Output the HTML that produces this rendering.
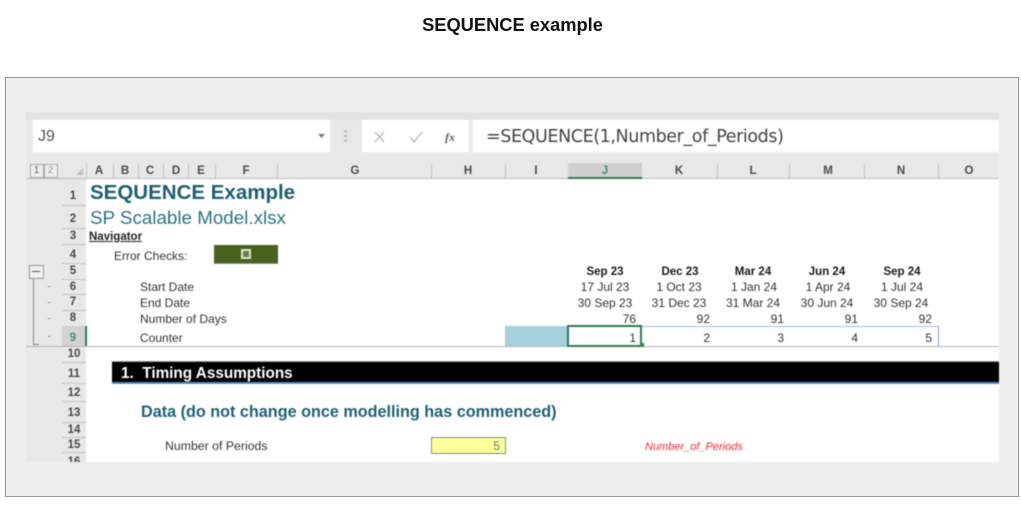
<!DOCTYPE html>
<html><head><meta charset="utf-8"><style>
html,body{margin:0;padding:0;background:#fff;width:1021px;height:531px;overflow:hidden;font-family:"Liberation Sans",sans-serif}
.h{position:absolute;left:0;top:13px;width:1025px;text-align:center;font-size:18.3px;font-weight:bold;line-height:24px;color:#111}
.f{position:absolute;left:5px;top:77px;width:1012px;height:418px;border:1px solid #979797;background:#eee}
.s{position:absolute;left:0;top:0;width:1021px;height:531px;filter:blur(.5px)}
.s div{position:absolute}
.t{position:absolute;white-space:nowrap;font-size:12px;line-height:14px;color:#333}
.c{text-align:center;transform:translateX(-50%)}
.r{text-align:right;transform:translateX(-100%)}
.b{font-weight:bold;color:#1a1a1a;font-size:11.5px}
.ch{font-weight:bold;color:#4a4a4a;font-size:11.5px}
.rn{font-weight:bold;color:#4a4a4a;font-size:11.5px;transform:translateX(-50%)}
</style></head><body>
<div class="h">SEQUENCE example</div>
<div class="f"></div>
<div class="s">
<div style="left:26px;top:112px;width:973px;height:350px;background:#e8e8e8"></div>
<div style="left:26px;top:112px;width:973px;height:8px;background:#e3e3e3"></div>
<div style="left:33px;top:120px;width:297px;height:32px;background:#fff"></div>
<div style="left:362px;top:120px;width:107px;height:32px;background:#fff"></div>
<div style="left:473px;top:120px;width:526px;height:32px;background:#fff"></div>
<div style="left:86px;top:179px;width:913px;height:283px;background:#fff"></div>
<div style="left:26px;top:178px;width:973px;height:1px;background:#bcbcbc"></div>
<span class="t" style="left:38px;top:127px;font-size:16px;line-height:20px;color:#555">J9</span>
<svg style="position:absolute;left:317px;top:133px" width="9" height="6"><path d="M1 1h7L4.500 5z" fill="#777"/></svg>
<svg style="position:absolute;left:343px;top:130px" width="6" height="14"><path d="M1 1h3M1 6h3M1 11h3" stroke="#bbb" stroke-width="2"/></svg>
<svg style="position:absolute;left:372px;top:130px" width="90" height="14" fill="none"><path d="M3 2l9 10M12 2L3 12" stroke="#b5b5b5" stroke-width="1.300"/><path d="M38 7l4 5 8-10" stroke="#b5b5b5" stroke-width="1.300"/></svg>
<span class="t" style="left:445px;top:129px;font:italic bold 12px/16px 'Liberation Serif',serif;color:#666">fx</span>
<span class="t" style="left:486px;top:126px;font-size:17.500px;line-height:22px;color:#444;font-family:'DejaVu Sans',sans-serif;letter-spacing:-.4px">=SEQUENCE(1,Number_of_Periods)</span>

<div style="left:30px;top:164px;width:12px;height:12px;border:1px solid #aaa;background:#eee"></div>
<div style="left:44px;top:164px;width:12px;height:12px;border:1px solid #aaa;background:#eee"></div>
<span class="t c" style="left:36.500px;top:164px;font-size:10px;color:#666">1</span>
<span class="t c" style="left:50.500px;top:164px;font-size:10px;color:#999">2</span>
<svg style="position:absolute;left:76px;top:168px" width="8" height="8"><path d="M7 0v7H0z" fill="#c4c4c4"/></svg>
<div style="left:86px;top:163px;width:1px;height:16px;background:#c8c8c8"></div>
<div style="left:113px;top:164px;width:1px;height:14px;background:#c4c4c4"></div>
<div style="left:138px;top:164px;width:1px;height:14px;background:#c4c4c4"></div>
<div style="left:163px;top:164px;width:1px;height:14px;background:#c4c4c4"></div>
<div style="left:188px;top:164px;width:1px;height:14px;background:#c4c4c4"></div>
<div style="left:215px;top:164px;width:1px;height:14px;background:#c4c4c4"></div>
<div style="left:277px;top:164px;width:1px;height:14px;background:#c4c4c4"></div>
<div style="left:431px;top:164px;width:1px;height:14px;background:#c4c4c4"></div>
<div style="left:505px;top:164px;width:1px;height:14px;background:#c4c4c4"></div>
<div style="left:568px;top:163px;width:74px;height:14px;background:#cfcfcf"></div>
<div style="left:568px;top:177px;width:74px;height:2px;background:#2f7d4f"></div>
<div style="left:717px;top:164px;width:1px;height:14px;background:#c4c4c4"></div>
<div style="left:789px;top:164px;width:1px;height:14px;background:#c4c4c4"></div>
<div style="left:864px;top:164px;width:1px;height:14px;background:#c4c4c4"></div>
<div style="left:938px;top:164px;width:1px;height:14px;background:#c4c4c4"></div>
<span class="t c ch" style="left:99px;top:164px">A</span>
<span class="t c ch" style="left:125px;top:164px">B</span>
<span class="t c ch" style="left:150px;top:164px">C</span>
<span class="t c ch" style="left:176px;top:164px">D</span>
<span class="t c ch" style="left:201px;top:164px">E</span>
<span class="t c ch" style="left:246px;top:164px">F</span>
<span class="t c ch" style="left:355px;top:164px">G</span>
<span class="t c ch" style="left:468px;top:164px">H</span>
<span class="t c ch" style="left:536px;top:164px">I</span>
<span class="t c ch" style="left:605px;top:164px;color:#4d8a68">J</span>
<span class="t c ch" style="left:679px;top:164px">K</span>
<span class="t c ch" style="left:753px;top:164px">L</span>
<span class="t c ch" style="left:828px;top:164px">M</span>
<span class="t c ch" style="left:901px;top:164px">N</span>
<span class="t c ch" style="left:969px;top:164px">O</span>

<div style="left:62px;top:205px;width:24px;height:1px;background:#c4c4c4"></div>
<div style="left:62px;top:228px;width:24px;height:1px;background:#c4c4c4"></div>
<div style="left:62px;top:244px;width:24px;height:1px;background:#c4c4c4"></div>
<div style="left:62px;top:263px;width:24px;height:1px;background:#c4c4c4"></div>
<div style="left:62px;top:279px;width:24px;height:1px;background:#c4c4c4"></div>
<div style="left:62px;top:294px;width:24px;height:1px;background:#c4c4c4"></div>
<div style="left:62px;top:310px;width:24px;height:1px;background:#c4c4c4"></div>
<div style="left:62px;top:326px;width:24px;height:20px;background:#d2d2d2"></div>
<div style="left:85px;top:326px;width:2px;height:20px;background:#2f7d4f"></div>
<div style="left:26px;top:346px;width:973px;height:1px;background:#b4b4b4"></div>
<div style="left:62px;top:362px;width:24px;height:1px;background:#c4c4c4"></div>
<div style="left:62px;top:383px;width:24px;height:1px;background:#c4c4c4"></div>
<div style="left:62px;top:401px;width:24px;height:1px;background:#c4c4c4"></div>
<div style="left:62px;top:422px;width:24px;height:1px;background:#c4c4c4"></div>
<div style="left:62px;top:437px;width:24px;height:1px;background:#c4c4c4"></div>
<div style="left:62px;top:452px;width:24px;height:1px;background:#c4c4c4"></div>
<span class="t rn" style="left:73px;top:189px">1</span>
<span class="t rn" style="left:73px;top:212px">2</span>
<span class="t rn" style="left:73px;top:229px">3</span>
<span class="t rn" style="left:73px;top:248px">4</span>
<span class="t rn" style="left:73px;top:264px">5</span>
<span class="t rn" style="left:73px;top:280px">6</span>
<span class="t rn" style="left:73px;top:295px">7</span>
<span class="t rn" style="left:73px;top:311px">8</span>
<span class="t rn" style="left:73px;top:331px;color:#4d8a68">9</span>
<span class="t rn" style="left:74px;top:347px">10</span>
<span class="t rn" style="left:74px;top:367px">11</span>
<span class="t rn" style="left:74px;top:386px">12</span>
<span class="t rn" style="left:74px;top:406px">13</span>
<span class="t rn" style="left:74px;top:423px">14</span>
<span class="t rn" style="left:74px;top:438px">15</span>
<div style="left:62px;top:453px;width:24px;height:9px;overflow:hidden"><span class="t rn" style="left:12px;top:2px">16</span></div>

<div style="left:29px;top:265px;width:13px;height:12px;border:1px solid #999;background:#eee"></div>
<div style="left:32px;top:271px;width:8px;height:1px;background:#555"></div>
<div style="left:33px;top:279px;width:1px;height:65px;background:#888"></div>
<div style="left:33px;top:344px;width:6px;height:1px;background:#888"></div>
<div style="left:48px;top:286px;width:2px;height:1px;background:#888"></div>
<div style="left:48px;top:302px;width:2px;height:1px;background:#888"></div>
<div style="left:48px;top:318px;width:2px;height:1px;background:#888"></div>
<div style="left:48px;top:336px;width:2px;height:1px;background:#888"></div>

<span class="t" style="left:90px;top:181px;font-size:20.500px;line-height:24px;font-weight:bold;color:#1d5e70">SEQUENCE Example</span>
<span class="t" style="left:90px;top:207px;font-size:18.800px;line-height:22px;color:#2d7286">SP Scalable Model.xlsx</span>
<span class="t" style="left:89px;top:230px;font-size:11.500px;font-weight:bold;color:#222;text-decoration:underline">Navigator</span>
<span class="t" style="left:114px;top:249px">Error Checks:</span>
<div style="left:214px;top:245px;width:64px;height:18px;background:#47611f;box-shadow:0 1px 0 #8a8a8a"></div>
<div style="left:241px;top:249px;width:10px;height:10px;background:#dfe5d0"></div>
<div style="left:243px;top:251px;width:6px;height:6px;background:#6b7f45"></div>

<span class="t" style="left:140px;top:280px">Start Date</span>
<span class="t" style="left:140px;top:296px">End Date</span>
<span class="t" style="left:140px;top:312px">Number of Days</span>
<span class="t" style="left:140px;top:331px">Counter</span>

<span class="t c b" style="left:605px;top:265px">Sep 23</span>
<span class="t c b" style="left:680px;top:265px">Dec 23</span>
<span class="t c b" style="left:753px;top:265px">Mar 24</span>
<span class="t c b" style="left:827px;top:265px">Jun 24</span>
<span class="t c b" style="left:902px;top:265px">Sep 24</span>
<span class="t c" style="left:605px;top:280px">17 Jul 23</span>
<span class="t c" style="left:679px;top:280px">1 Oct 23</span>
<span class="t c" style="left:754px;top:280px">1 Jan 24</span>
<span class="t c" style="left:828px;top:280px">1 Apr 24</span>
<span class="t c" style="left:902px;top:280px">1 Jul 24</span>
<span class="t c" style="left:605px;top:296px">30 Sep 23</span>
<span class="t c" style="left:679px;top:296px">31 Dec 23</span>
<span class="t c" style="left:753px;top:296px">31 Mar 24</span>
<span class="t c" style="left:827px;top:296px">30 Jun 24</span>
<span class="t c" style="left:901px;top:296px">30 Sep 24</span>
<span class="t r" style="left:636px;top:312px">76</span>
<span class="t r" style="left:710px;top:312px">92</span>
<span class="t r" style="left:784px;top:312px">91</span>
<span class="t r" style="left:858px;top:312px">91</span>
<span class="t r" style="left:932px;top:312px">92</span>

<div style="left:505px;top:326px;width:63px;height:20px;background:#a6d0db"></div>
<div style="left:642px;top:326px;width:296px;height:1px;background:#a9bde2"></div>
<div style="left:938px;top:326px;width:1px;height:20px;background:#7f9fdc"></div>
<div style="left:567px;top:325px;width:71px;height:18px;border:2px solid #2f7d4f;background:#fff"></div>
<div style="left:640px;top:343px;width:4px;height:4px;background:#2f7d4f"></div>
<span class="t r" style="left:636px;top:331px">1</span>
<span class="t r" style="left:710px;top:331px">2</span>
<span class="t r" style="left:784px;top:331px">3</span>
<span class="t r" style="left:858px;top:331px">4</span>
<span class="t r" style="left:932px;top:331px">5</span>

<div style="left:112px;top:361px;width:887px;height:1px;background:#999"></div>
<div style="left:112px;top:362px;width:887px;height:20px;background:#000"></div>
<div style="left:112px;top:382px;width:887px;height:2px;background:#5c8ac4"></div>
<span class="t" style="left:121px;top:365px;font-size:15.300px;line-height:17px;font-weight:bold;color:#fff">1.&nbsp; Timing Assumptions</span>
<span class="t" style="left:141px;top:403px;font-size:16.200px;line-height:18px;font-weight:bold;color:#1f6276">Data (do not change once modelling has commenced)</span>
<span class="t" style="left:165px;top:439px;font-size:12.300px">Number of Periods</span>
<div style="left:431px;top:437px;width:73px;height:15px;background:#ffff99;border:1px solid #6f9a85"></div>
<span class="t r" style="left:500px;top:439px;color:#5f7f6a">5</span>
<span class="t" style="left:645px;top:440px;font-size:11px;font-style:italic;color:#f5263a">Number_of_Periods</span>
</div>
</body></html>
